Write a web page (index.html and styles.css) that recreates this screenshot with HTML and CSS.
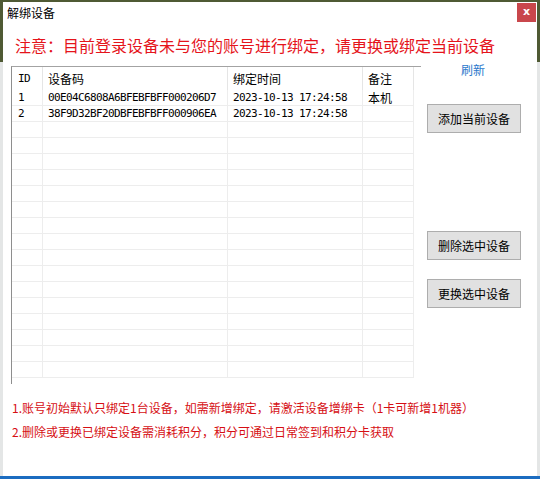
FILE: index.html
```html
<!DOCTYPE html>
<html lang="zh-CN">
<head>
<meta charset="utf-8">
<title>解绑设备</title>
<link rel="stylesheet" href="styles.css">
</head>
<body>
<div class="desktop">
  <div class="dialog">
    <div class="titlebar">
      <span class="title">解绑设备</span>
      <span class="close">x</span>
    </div>
    <div class="warning">注意：目前登录设备未与您的账号进行绑定，请更换或绑定当前设备</div>
    <div class="main">
      <div class="listview">
        <div class="row head">
          <div class="cell c1">ID</div>
          <div class="cell c2 cjk">设备码</div>
          <div class="cell c3 cjk">绑定时间</div>
          <div class="cell c4 cjk">备注</div>
        </div>
        <div class="row">
          <div class="cell c1">1</div>
          <div class="cell c2">00E04C6808A6BFEBFBFF000206D7</div>
          <div class="cell c3">2023-10-13 17:24:58</div>
          <div class="cell c4 cjk">本机</div>
        </div>
        <div class="row">
          <div class="cell c1">2</div>
          <div class="cell c2">38F9D32BF20DBFEBFBFF000906EA</div>
          <div class="cell c3">2023-10-13 17:24:58</div>
          <div class="cell c4"></div>
        </div>
        <div class="row"><div class="cell c1"></div><div class="cell c2"></div><div class="cell c3"></div><div class="cell c4"></div></div>
        <div class="row"><div class="cell c1"></div><div class="cell c2"></div><div class="cell c3"></div><div class="cell c4"></div></div>
        <div class="row"><div class="cell c1"></div><div class="cell c2"></div><div class="cell c3"></div><div class="cell c4"></div></div>
        <div class="row"><div class="cell c1"></div><div class="cell c2"></div><div class="cell c3"></div><div class="cell c4"></div></div>
        <div class="row"><div class="cell c1"></div><div class="cell c2"></div><div class="cell c3"></div><div class="cell c4"></div></div>
        <div class="row"><div class="cell c1"></div><div class="cell c2"></div><div class="cell c3"></div><div class="cell c4"></div></div>
        <div class="row"><div class="cell c1"></div><div class="cell c2"></div><div class="cell c3"></div><div class="cell c4"></div></div>
        <div class="row"><div class="cell c1"></div><div class="cell c2"></div><div class="cell c3"></div><div class="cell c4"></div></div>
        <div class="row"><div class="cell c1"></div><div class="cell c2"></div><div class="cell c3"></div><div class="cell c4"></div></div>
        <div class="row"><div class="cell c1"></div><div class="cell c2"></div><div class="cell c3"></div><div class="cell c4"></div></div>
        <div class="row"><div class="cell c1"></div><div class="cell c2"></div><div class="cell c3"></div><div class="cell c4"></div></div>
        <div class="row"><div class="cell c1"></div><div class="cell c2"></div><div class="cell c3"></div><div class="cell c4"></div></div>
        <div class="row"><div class="cell c1"></div><div class="cell c2"></div><div class="cell c3"></div><div class="cell c4"></div></div>
        <div class="row"><div class="cell c1"></div><div class="cell c2"></div><div class="cell c3"></div><div class="cell c4"></div></div>
        <div class="row"><div class="cell c1"></div><div class="cell c2"></div><div class="cell c3"></div><div class="cell c4"></div></div>
        <div class="row"><div class="cell c1"></div><div class="cell c2"></div><div class="cell c3"></div><div class="cell c4"></div></div>
      </div>
      <div class="side">
        <a class="refresh">刷新</a>
        <button class="btn btn-add">添加当前设备</button>
        <button class="btn btn-del">删除选中设备</button>
        <button class="btn btn-rep">更换选中设备</button>
      </div>
    </div>
    <div class="notes">
      <div class="note">1.账号初始默认只绑定1台设备，如需新增绑定，请激活设备增绑卡（1卡可新增1机器）</div>
      <div class="note">2.删除或更换已绑定设备需消耗积分，积分可通过日常签到和积分卡获取</div>
    </div>
  </div>
</div>
</body>
</html>
```
FILE: styles.css
```css
html, body {
  margin: 0;
  padding: 0;
}
body {
  width: 540px;
  height: 479px;
  overflow: hidden;
  font-family: "Noto Sans CJK SC", "Noto Sans", sans-serif;
}
.desktop {
  position: relative;
  width: 540px;
  height: 479px;
  background:
    linear-gradient(to top, #1b6cc0 0 3px, transparent 3px),
    linear-gradient(to bottom, #4f5a34 0 62px, #e4e6e6 62px 100%);
}
.dialog {
  position: absolute;
  left: 3px;
  top: 2px;
  width: 534px;
  height: 474px;
  background: #ffffff;
  box-sizing: border-box;
}
.titlebar {
  height: 22px;
  display: flex;
  align-items: center;
  justify-content: space-between;
  padding-left: 4px;
}
.title {
  font-size: 12px;
  line-height: 14px;
  color: #000;
}
.close {
  width: 19px;
  height: 19px;
  margin-right: 1px;
  margin-top: -1px;
  background: #c9474c;
  color: #fff;
  font-family: "DejaVu Sans", sans-serif;
  font-size: 11px;
  font-weight: bold;
  line-height: 17px;
  text-align: center;
}
.warning {
  margin-top: 11px;
  padding-left: 12px;
  font-size: 16px;
  line-height: 20px;
  color: #e5141b;
  white-space: nowrap;
}
.main {
  display: flex;
  margin-top: 11px;
  padding-left: 8px;
}
.listview {
  width: 409px;
  height: 317px;
  border-top: 1px solid #a3a3a3;
  border-left: 1px solid #8e8e8e;
  overflow: hidden;
  background: #fff;
}
.row {
  display: grid;
  grid-template-columns: 31px 185px 135px 51px;
  height: 16px;
}
.row.head {
  height: 23px;
}
.cell {
  box-sizing: border-box;
  border-right: 1px solid #ededed;
  border-bottom: 1px solid #ededed;
  padding-left: 5px;
  font-family: "DejaVu Sans Mono", "Noto Sans CJK SC", monospace;
  font-size: 11px;
  letter-spacing: -0.62px;
  line-height: 15px;
  color: #000;
  white-space: nowrap;
  overflow: hidden;
}
.head .cell {
  border-bottom: none;
  border-right: 1px solid #e5e5e5;
  line-height: 23px;
}
.cell.c1 {
  padding-left: 6px;
}
.cell.cjk {
  font-family: "Noto Sans CJK SC", sans-serif;
  font-size: 12px;
  letter-spacing: 0;
}
.side {
  display: flex;
  flex-direction: column;
  align-items: flex-start;
  padding-left: 6px;
}
.refresh {
  margin-left: 34px;
  margin-top: -3px;
  font-size: 12px;
  line-height: 14px;
  color: #2a78cc;
  cursor: pointer;
}
.btn {
  width: 94px;
  height: 29px;
  padding: 0;
  background: #e1e1e1;
  border: 1px solid #adadad;
  font-family: "Noto Sans CJK SC", sans-serif;
  font-size: 12px;
  color: #000;
}
.btn-add {
  margin-top: 27px;
}
.btn-del {
  margin-top: 98px;
}
.btn-rep {
  margin-top: 19px;
}
.notes {
  margin-top: 12px;
  padding-left: 9px;
}
.note {
  font-size: 12px;
  line-height: 24px;
  color: #d60f14;
  white-space: nowrap;
}
```
